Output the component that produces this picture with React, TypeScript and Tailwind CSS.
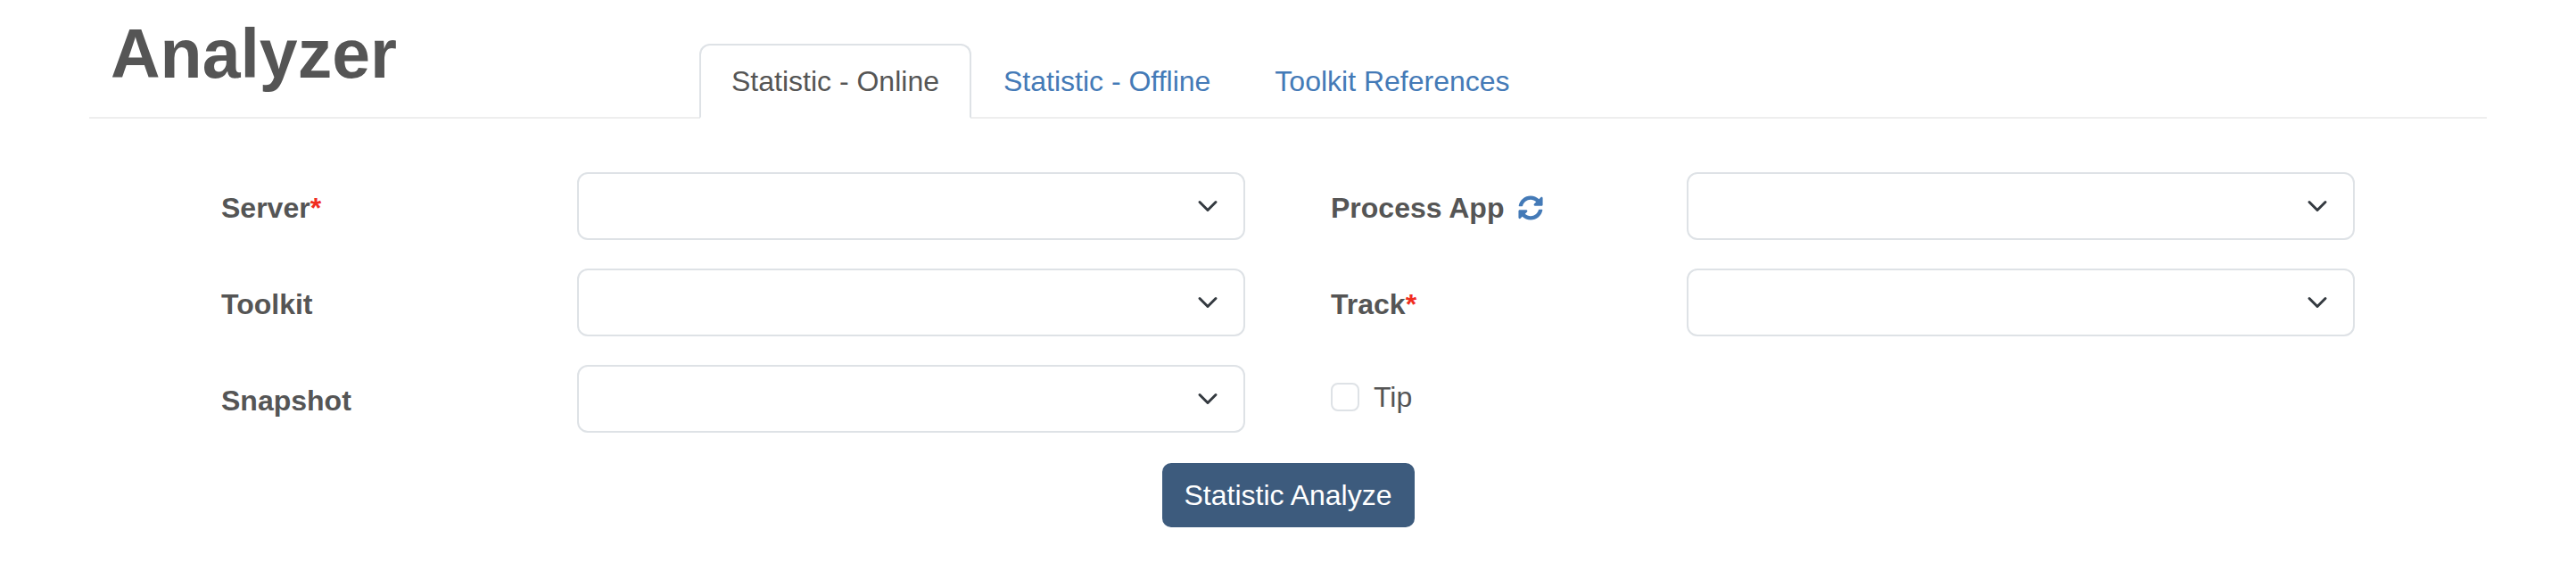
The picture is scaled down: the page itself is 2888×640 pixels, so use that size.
import { useId, type ReactNode } from "react";
import { FaSyncAlt } from "react-icons/fa";

const tabs = ["Statistic - Online", "Statistic - Offline", "Toolkit References"];

type FieldProps = { label: string; required?: boolean; action?: ReactNode };

function SelectField({ label, required, action }: FieldProps) {
  const id = useId();
  return (
    <div className="grid grid-cols-3 gap-12">
      <div className="flex items-center gap-4 pt-4 pb-3">
        <label htmlFor={id} className="font-bold">
          {label}
          {required && <span className="text-[#f02d1f]">*</span>}
        </label>
        {action}
      </div>
      <div className="relative col-span-2">
        <select
          id={id}
          className="block h-19 w-full appearance-none rounded-xl border-2 border-[#dee2e6] bg-white pr-18 pl-6"
        />
        <svg
          viewBox="0 0 16 16"
          className="pointer-events-none absolute top-[26px] right-[30px] size-6"
          fill="none"
          stroke="#343a40"
          strokeWidth="2"
          strokeLinecap="round"
          strokeLinejoin="round"
          aria-hidden="true"
        >
          <path d="m2 5 6 6 6-6" />
        </svg>
      </div>
    </div>
  );
}

export default function App() {
  return (
    <div className="bg-white px-[100px] font-['Liberation_Sans',Arial,sans-serif] text-[32px] leading-[48px] text-[#555555]">
      <header className="grid grid-cols-[25%_1fr] border-b-2 border-[#eeeeee]">
        <h1 className="pt-3 pb-[23px] pl-6 text-[77px] leading-[96px] font-bold">Analyzer</h1>
        <nav className="-mb-0.5 flex items-end pl-3">
          {tabs.map((tab, i) => (
            <a
              key={tab}
              href="#"
              aria-current={i === 0 ? "page" : undefined}
              className={
                i === 0
                  ? "rounded-t-xl border-2 border-[#dee2e6] border-b-white bg-white px-[34px] py-4"
                  : "border-2 border-transparent px-[34px] py-4 text-[#447ab7]"
              }
            >
              {tab}
            </a>
          ))}
        </nav>
      </header>

      <form className="px-[148px] pt-15 pb-12" onSubmit={(e) => e.preventDefault()}>
        <div className="grid grid-cols-2 gap-x-24 gap-y-8">
          <SelectField label="Server" required />
          <SelectField
            label="Process App"
            action={
              <button type="button" aria-label="Refresh" className="text-[#447ab7]">
                <FaSyncAlt className="size-7" />
              </button>
            }
          />
          <SelectField label="Toolkit" />
          <SelectField label="Track" required />
          <SelectField label="Snapshot" />
          <div className="flex items-start pt-3">
            <label className="flex items-center gap-4">
              <input
                type="checkbox"
                className="size-8 appearance-none rounded-lg border-2 border-[#dee2e6] bg-white checked:bg-[#3d5b7d]"
              />
              Tip
            </label>
          </div>
        </div>
        <div className="mt-8 flex justify-center">
          <button
            type="submit"
            className="rounded-xl border-2 border-white bg-[#3d5b7d] px-[25px] py-3 text-white"
          >
            Statistic Analyze
          </button>
        </div>
      </form>
    </div>
  );
}
